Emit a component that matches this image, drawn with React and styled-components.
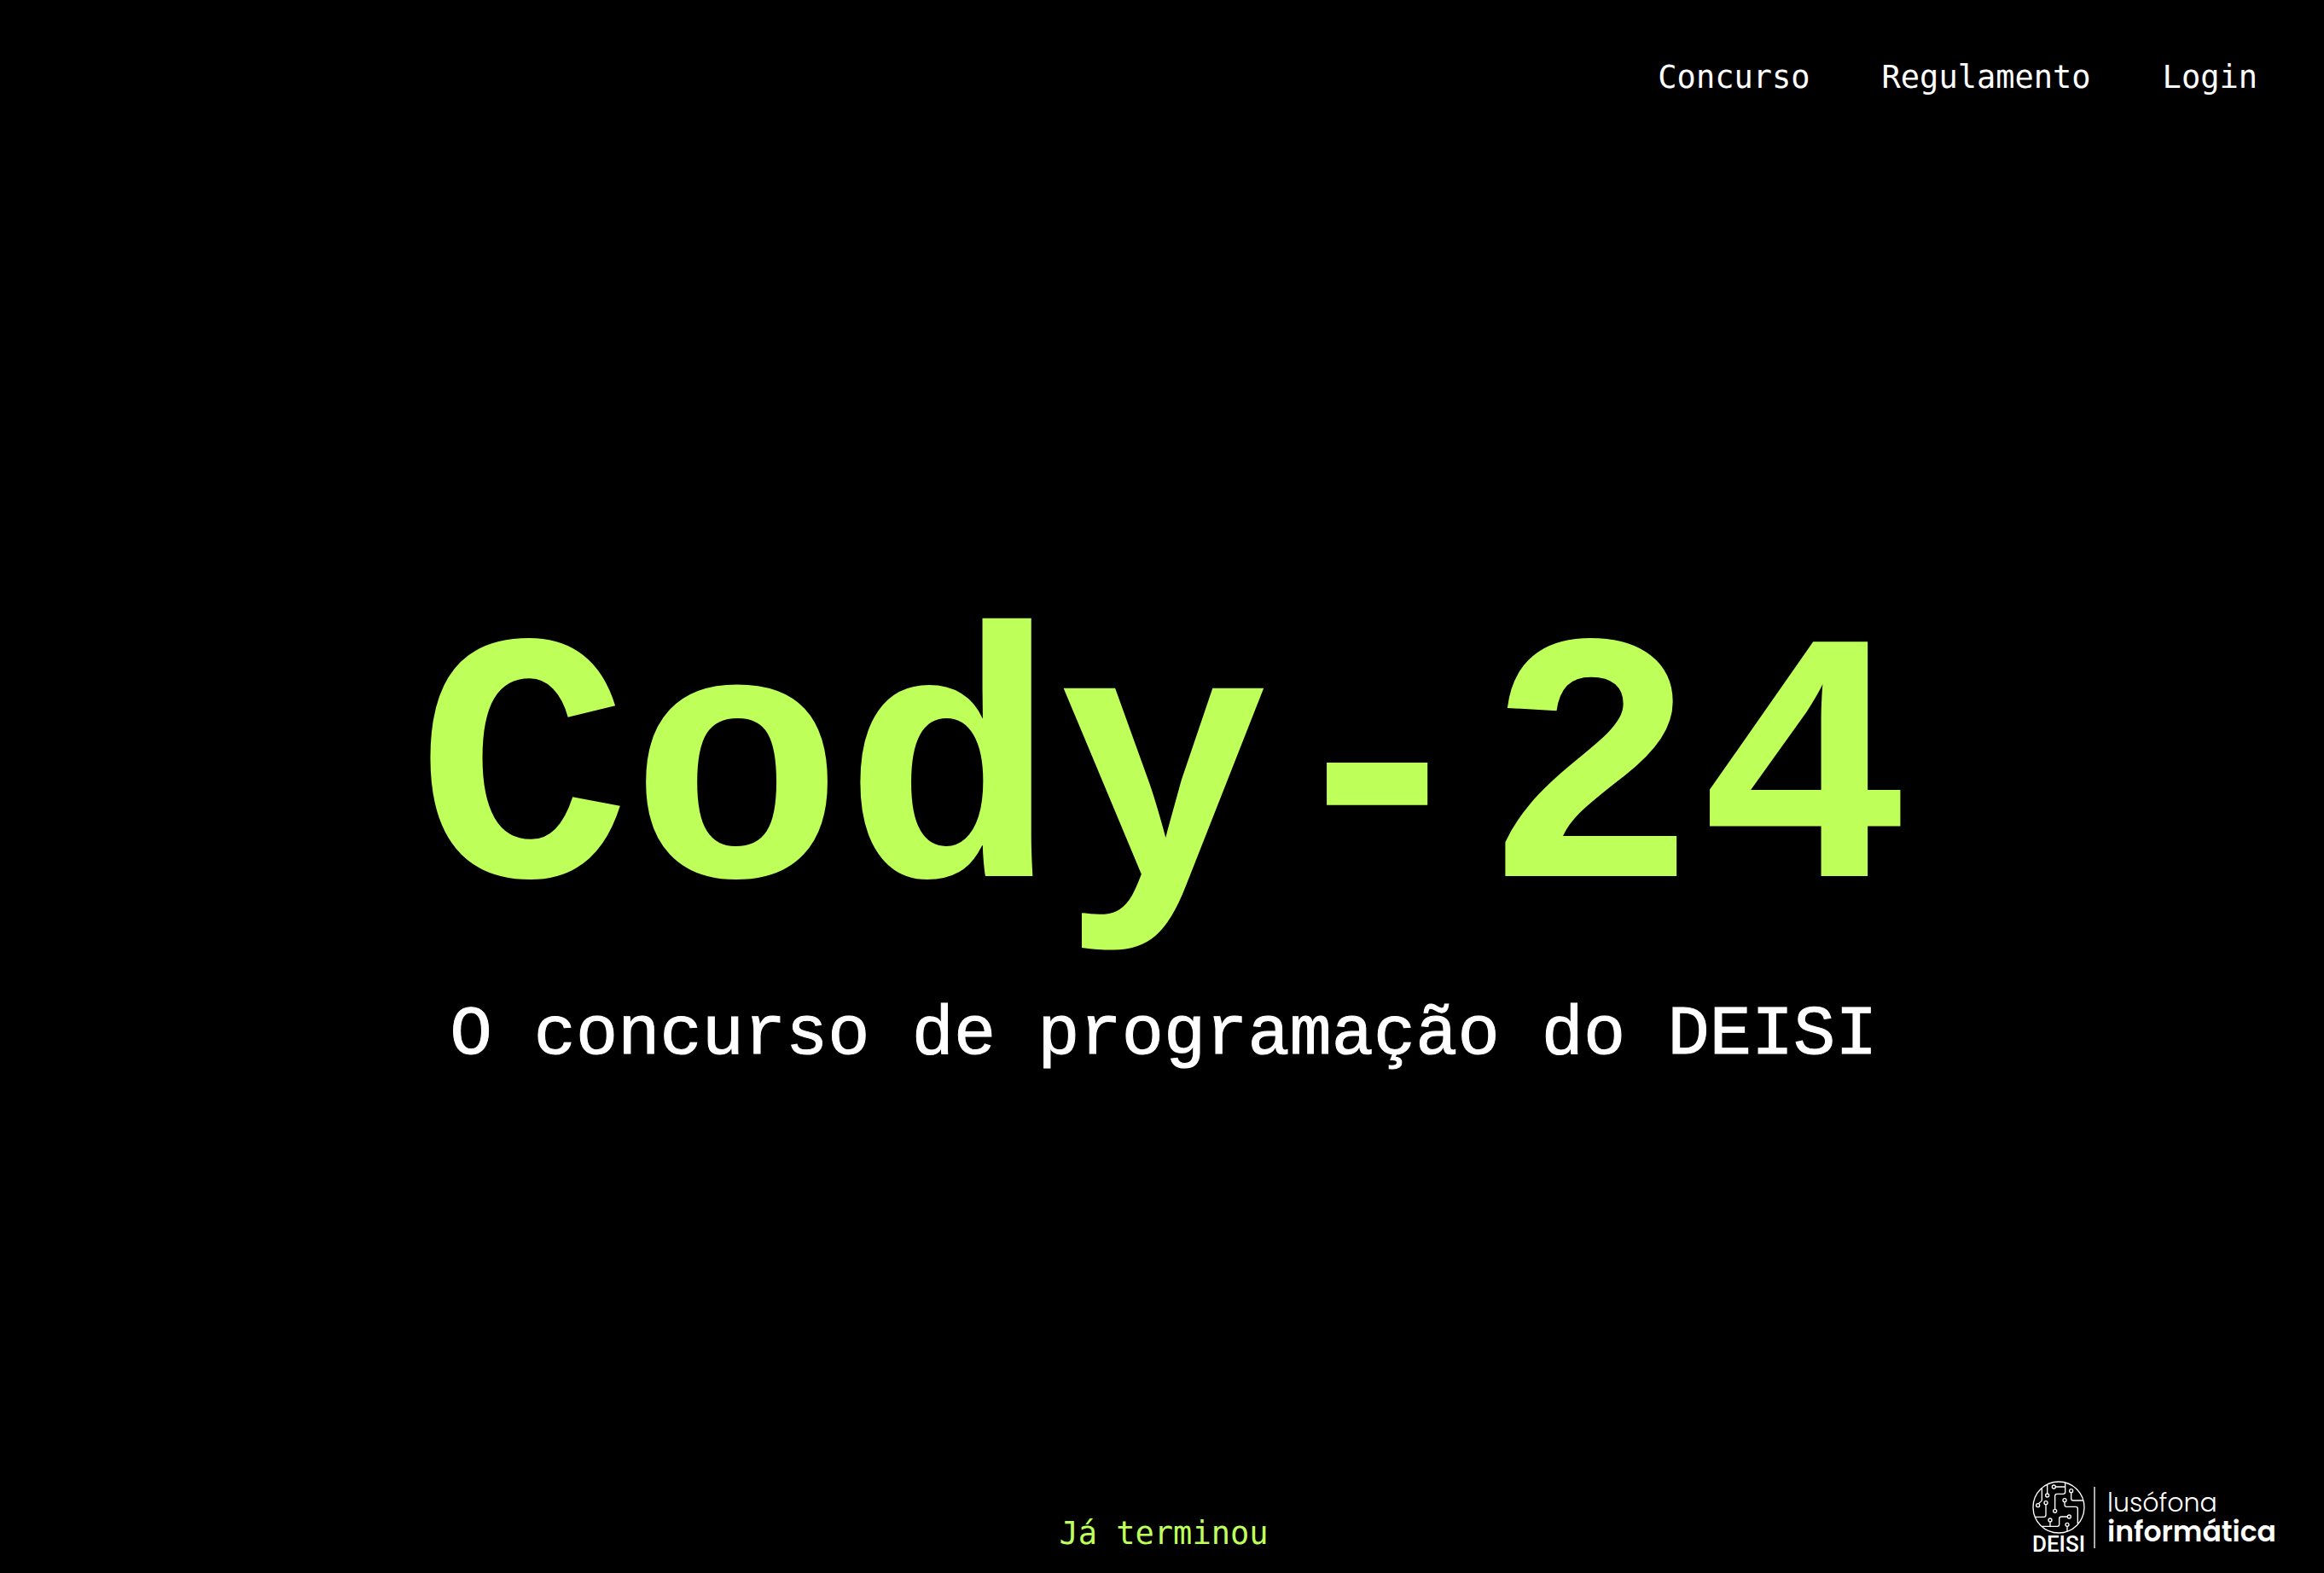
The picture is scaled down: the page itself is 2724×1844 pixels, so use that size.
import React from "react";
import styled, { createGlobalStyle } from "styled-components";

const LIME = "#bfff5a";

const GlobalStyle = createGlobalStyle`
  *, *::before, *::after { box-sizing: border-box; }
  body { margin: 0; background: #000; color: #fff; }
`;

const Page = styled.div`
  min-height: 100vh;
  display: grid;
  grid-template-rows: 180px 1fr 180px;
  background: #000;
  font-family: Menlo, "DejaVu Sans Mono", monospace;
  font-size: 37px;
  line-height: 44px;
`;

const Nav = styled.nav`
  display: flex;
  justify-content: flex-end;
  align-items: flex-start;
  gap: 84px;
  padding: 69px 78px 0;
`;

const NavLink = styled.a`
  color: #fff;
  text-decoration: none;
`;

const Hero = styled.main`
  display: flex;
  flex-direction: column;
  align-items: center;
  justify-content: center;
  gap: 14px;
  padding: 98px 0 0 4px;
  font-family: "Courier New", "Liberation Mono", monospace;
  text-align: center;
`;

const Title = styled.h1`
  margin: 0;
  color: ${LIME};
  font-size: 417px;
  font-weight: 700;
  line-height: 472px;
`;

const Subtitle = styled.p`
  margin: 0;
  font-size: 82px;
  line-height: 96px;
  -webkit-text-stroke: 1px #fff;
`;

const Footer = styled.footer`
  display: grid;
  grid-template-columns: 1fr auto 1fr;
  align-items: end;
  padding: 0 56px 22px 60px;
`;

const Status = styled.p`
  grid-column: 2;
  margin: 0;
  padding-bottom: 2px;
  color: ${LIME};
`;

const Brand = styled.a`
  justify-self: end;
  display: flex;
  align-items: center;
  gap: 10px;
  color: #fff;
  text-decoration: none;
`;

const Emblem = styled.span`
  display: flex;
  flex-direction: column;
  align-items: center;
  font: 500 26px/24px Roboto, sans-serif;
`;

const Divider = styled.span`
  width: 2px;
  height: 72px;
  background: #aaa;
`;

const Wordmark = styled.span`
  display: flex;
  flex-direction: column;
  padding-left: 4px;
  font-family: Poppins, Inter, sans-serif;
  font-feature-settings: "cv11";
  line-height: 34px;
`;

const Light = styled.span`
  font-size: 30px;
  font-weight: 300;
`;

const Strong = styled.strong`
  font-size: 33px;
  font-weight: 600;
`;

function Circuit() {
  return (
    <svg width="62" height="62" viewBox="0 0 186 186" fill="none" stroke="#fff" strokeWidth="4" aria-hidden="true">
      <circle cx="93" cy="93" r="90" />
      <path d="M53 14V44M34 27V66Q34 72 28 75L22 80M84 21H116M116 6V40Q116 46 109 46H87Q80 46 80 53V99M137 42V62Q137 69 144 69H180M114 75V84Q114 91 121 91H153Q160 91 160 98V150M48 84V120Q48 127 41 127H10M63 145V160M34 160H88Q95 160 95 153V133Q95 126 102 126H123M123 160V178" />
      <g fill="#000">
        <circle cx="76" cy="21" r="6" />
        <circle cx="53" cy="51" r="6" />
        <circle cx="20" cy="86" r="6" />
        <circle cx="48" cy="77" r="6" />
        <circle cx="80" cy="106" r="6" />
        <circle cx="137" cy="35" r="6" />
        <circle cx="114" cy="68" r="6" />
        <circle cx="63" cy="138" r="6" />
        <circle cx="130" cy="126" r="6" />
        <circle cx="123" cy="154" r="6" />
      </g>
    </svg>
  );
}

export default function App() {
  return (
    <>
      <GlobalStyle />
      <Page>
        <Nav>
          <NavLink href="#concurso">Concurso</NavLink>
          <NavLink href="#regulamento">Regulamento</NavLink>
          <NavLink href="#login">Login</NavLink>
        </Nav>
        <Hero>
          <Title>Cody-24</Title>
          <Subtitle>O concurso de programação do DEISI</Subtitle>
        </Hero>
        <Footer>
          <Status>Já terminou</Status>
          <Brand href="#deisi">
            <Emblem>
              <Circuit />
              DEISI
            </Emblem>
            <Divider />
            <Wordmark>
              <Light>lusófona</Light>
              <Strong>informática</Strong>
            </Wordmark>
          </Brand>
        </Footer>
      </Page>
    </>
  );
}
